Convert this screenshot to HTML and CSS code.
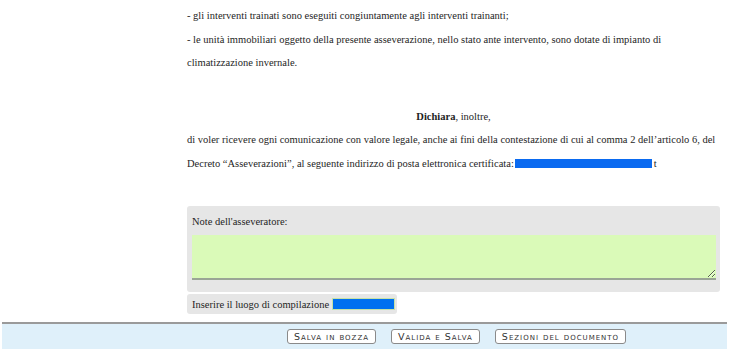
FILE: index.html
```html
<!DOCTYPE html>
<html lang="it">
<head>
<meta charset="utf-8">
<link rel="stylesheet" href="styles.css">
</head>
<body>
<div class="page">
  <div class="doc">
    <p class="line">- gli interventi trainati sono eseguiti congiuntamente agli interventi trainanti;</p>
    <p class="line">- le unità immobiliari oggetto della presente asseverazione, nello stato ante intervento, sono dotate di impianto di climatizzazione invernale.</p>
    <p class="line center gap"><b>Dichiara</b>, inoltre,</p>
    <p class="line">di voler ricevere ogni comunicazione con valore legale, anche ai fini della contestazione di cui al comma 2 dell’articolo 6, del<br>Decreto “Asseverazioni”, al seguente indirizzo di posta elettronica certificata:<span class="redact"></span>t</p>

    <div class="notes">
      <label class="notes-label" for="note">Note dell'asseveratore:</label>
      <textarea id="note" class="notes-area"></textarea>
    </div>
    <div class="place">
      <span class="place-label">Inserire il luogo di compilazione</span>
      <span class="place-input"></span>
    </div>
  </div>
  <div class="footer">
    <button class="btn">Salva in bozza</button>
    <button class="btn">Valida e Salva</button>
    <button class="btn">Sezioni del documento</button>
  </div>
</div>
</body>
</html>
```

FILE: styles.css
```css
html, body {
  margin: 0;
  padding: 0;
  background: #ffffff;
}
.page {
  width: 729px;
  height: 350px;
  overflow: hidden;
  font-family: "Liberation Serif", "Times New Roman", serif;
  color: #1e1e1e;
}
.doc {
  padding: 4px 9px 0 187px;
}
.line {
  margin: 0;
  font-size: 10.5px;
  line-height: 23.5px;
}
.center {
  text-align: center;
}
.gap {
  margin-top: 30px;
}
.redact {
  display: inline-block;
  width: 137px;
  height: 9px;
  background: #0a6af0;
  vertical-align: -1px;
  margin-left: 1px;
  margin-right: 2px;
}
.notes {
  margin-top: 31px;
  background: #e6e6e6;
  border-radius: 3px;
  padding: 8px 4px 12px 5px;
  display: flex;
  flex-direction: column;
}
.notes-label {
  font-size: 10.5px;
  line-height: 16px;
  margin-bottom: 5px;
}
.notes-area {
  display: block;
  height: 45px;
  box-sizing: border-box;
  background: #dafab8;
  border: none;
  border-bottom: 2px solid #9aa595;
  margin: 0;
  padding: 0;
  resize: vertical;
}
.place {
  margin-top: 2px;
  align-self: flex-start;
  width: max-content;
  height: 20px;
  box-sizing: border-box;
  background: #e6e6e6;
  border-radius: 3px;
  padding: 0 2px 0 5px;
  display: flex;
  align-items: center;
  gap: 3px;
  font-size: 10.5px;
}
.place-label {
  white-space: nowrap;
}
.place-input {
  width: 61px;
  height: 10px;
  background: #0070f0;
  border: 1px solid #c6e2a8;
}
.footer {
  margin: 8px 2px 0 2px;
  height: 25px;
  background: #dff0fa;
  border-top: 2px solid #9a9a9a;
  display: flex;
  justify-content: flex-start;
  align-items: center;
  padding-left: 285px;
  gap: 15px;
}
.btn {
  font-family: "DejaVu Sans", Verdana, sans-serif;
  font-variant: small-caps;
  font-size: 9.5px;
  letter-spacing: 1px;
  color: #333;
  background: #ffffff;
  border: 1px solid #8a8a8a;
  border-radius: 3px;
  height: 15px;
  padding: 0 6px;
  line-height: 12px;
}
```
